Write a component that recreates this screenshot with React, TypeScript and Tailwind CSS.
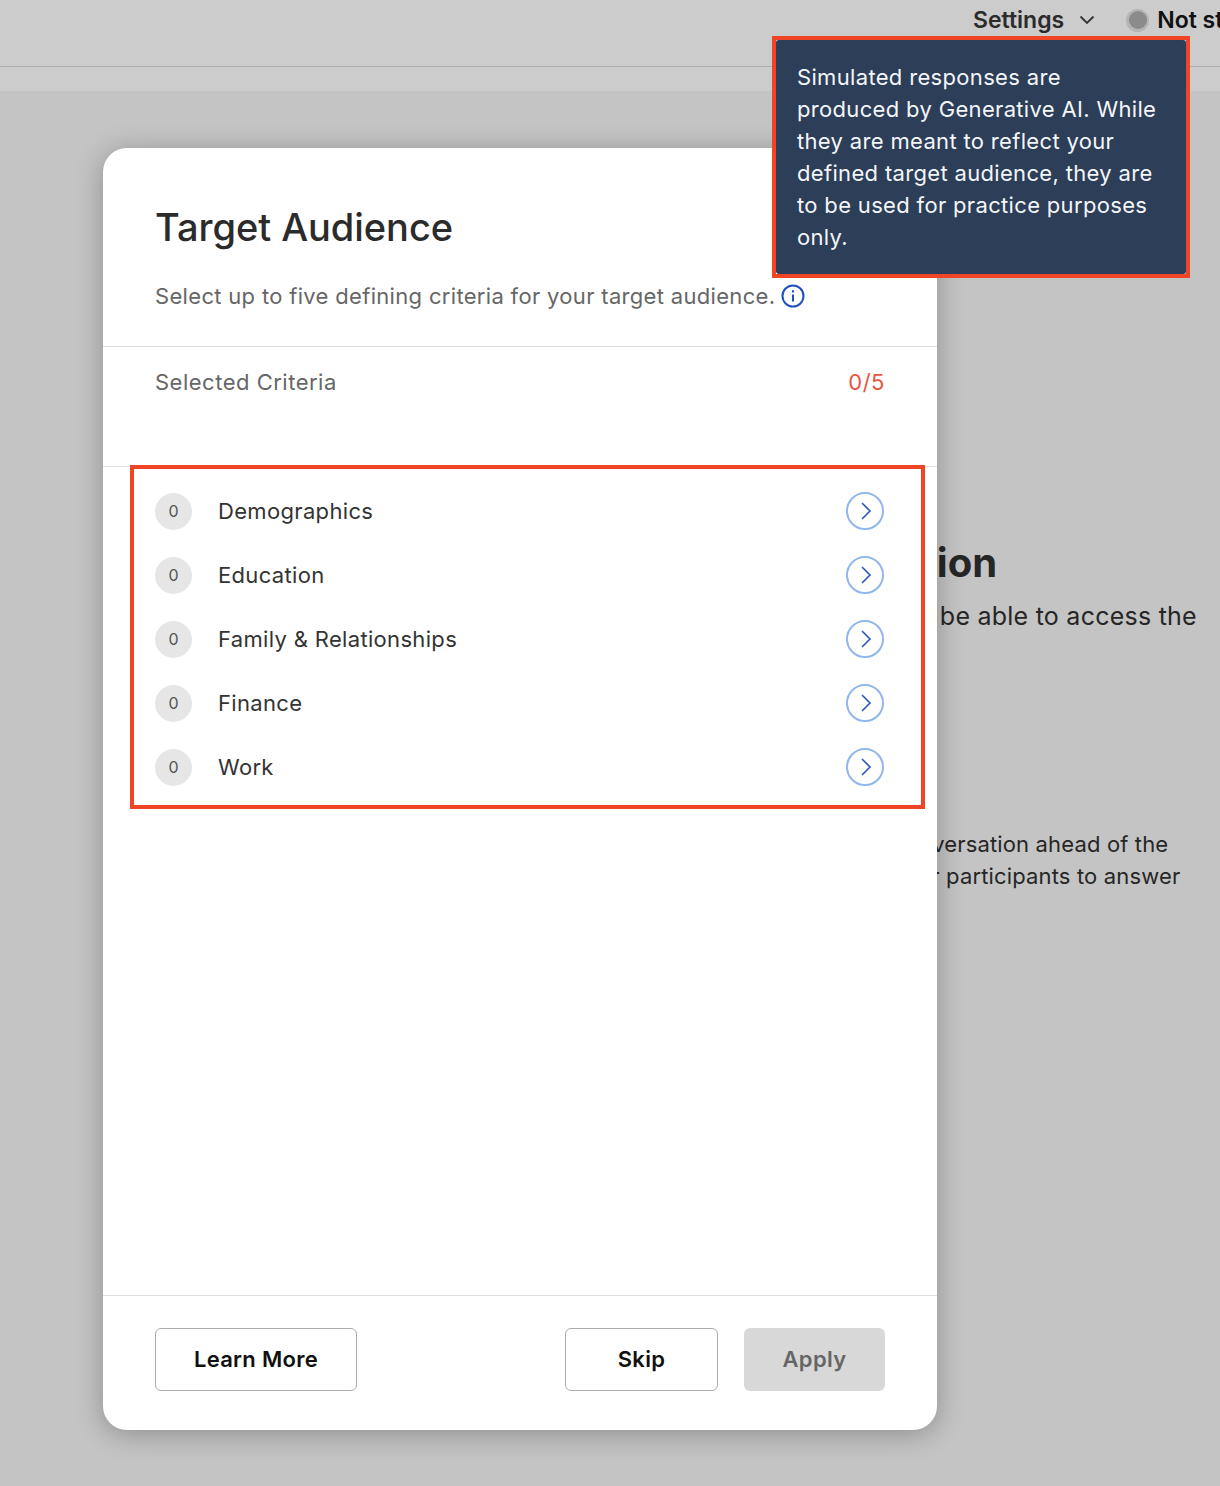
import React from "react";

const rows = ["Demographics", "Education", "Family & Relationships", "Finance", "Work"];

function Row({ label }: { label: string }) {
  return (
    <div className="flex h-16 items-center">
      <div className="flex h-[37px] w-[37px] items-center justify-center rounded-full bg-[#e6e6e6] text-[16px] text-[#555555]">0</div>
      <div className="ml-[26px] flex-1 text-[22px] leading-8 tracking-[0.33px] text-[#333333]">{label}</div>
      <div className="mr-px flex h-[38px] w-[38px] items-center justify-center rounded-full border-2 border-[#93b6ec]">
        <svg className="ml-px" width="12" height="20" viewBox="0 0 12 20" fill="none" stroke="#2a55bd" strokeWidth="1.6">
          <path d="M2 2l8 8-8 8" />
        </svg>
      </div>
    </div>
  );
}

export default function App() {
  return (
    <div className="relative h-[1486px] w-[1220px] overflow-hidden bg-[#c4c4c4] font-['Inter',sans-serif]">
      <header className="flex h-[67px] items-start justify-end border-b border-[#adadad] bg-[#cccccc] pt-[3px]">
        <div className="flex h-[34px] w-[247px] shrink-0 items-center overflow-hidden whitespace-nowrap text-[23px]">
          <span className="font-semibold text-[#2b2b2b]">Settings</span>
          <svg className="ml-[15px] shrink-0" width="16" height="10" viewBox="0 0 16 10" fill="none" stroke="#333333" strokeWidth="1.8">
            <path d="M1.5 1.5L8 8l6.5-6.5" />
          </svg>
          <span className="ml-[31px] flex h-[23px] w-[23px] shrink-0 items-center justify-center rounded-full bg-[#b4b4b4]">
            <span className="h-[18px] w-[18px] rounded-full bg-[#8b8b8b]" />
          </span>
          <span className="ml-[8px] font-semibold text-[#111111]">Not started</span>
        </div>
      </header>
      <div className="h-6 bg-[#cccccc]" />
      <main className="whitespace-nowrap pt-[450px] text-[#262626]">
        <div className="ml-[899px] text-[40px] font-bold leading-[44px]">ation</div>
        <div className="ml-[893px] mt-[13px] text-[25px] leading-9 tracking-[0.24px]">will be able to access the</div>
        <div className="ml-[906px] mt-[194px] text-[22px] leading-8 tracking-[0.15px]">onversation ahead of the</div>
        <div className="ml-[918px] text-[22px] leading-8 tracking-[0.15px]">or participants to answer</div>
      </main>

      <section className="absolute left-[103px] top-[148px] flex h-[1282px] w-[834px] flex-col rounded-[24px] bg-white shadow-[0_4px_28px_rgba(0,0,0,0.28)]">
        <div className="h-[199px] shrink-0 border-b border-[#dddddd] px-[52px] pt-[54px]">
          <h1 className="text-[38px] font-medium leading-[50px] tracking-[-0.05px] text-[#2b2b2b]">Target Audience</h1>
          <div className="mt-[26px] flex items-center text-[22px] leading-9 tracking-[0.32px] text-[#666666]">
            <span>Select up to five defining criteria for your target audience.</span>
            <svg className="ml-[6px]" width="24" height="24" viewBox="0 0 24 24" fill="none" stroke="#1f4fc0" strokeWidth="2">
              <circle cx="12" cy="12" r="10.5" />
              <path d="M12 10.5v7" />
              <path d="M12 6.2v2.2" />
            </svg>
          </div>
        </div>
        <div className="flex h-[120px] shrink-0 justify-between border-b border-[#e2e2e2] px-[52px] pt-[19px] text-[22px] leading-8 tracking-[0.5px]">
          <span className="text-[#666666]">Selected Criteria</span>
          <span className="text-[#e8553f]">0/5</span>
        </div>
        <div className="flex-1 px-[52px] pt-[12px]">
          {rows.map((r) => (
            <Row key={r} label={r} />
          ))}
        </div>
        <div className="flex h-[135px] shrink-0 items-start border-t border-[#dddddd] px-[52px] pt-[32px]">
          <button className="h-[63px] w-[202px] rounded-[6px] border border-[#ababab] text-[22px] font-semibold tracking-[0.3px] text-[#111111]">Learn More</button>
          <button className="ml-auto h-[63px] w-[153px] rounded-[6px] border border-[#ababab] text-[22px] font-semibold tracking-[0.3px] text-[#111111]">Skip</button>
          <button className="ml-[26px] h-[63px] w-[141px] rounded-[6px] bg-[#d8d8d8] text-[22px] font-semibold tracking-[0.3px] text-[#666666]">Apply</button>
        </div>
      </section>

      <div className="absolute left-[772px] top-[36px] h-[242px] w-[418px] border-4 border-[#f04427]">
        <div className="h-full rounded-[3px] bg-[#2c3e58] px-[21px] pt-[21px] text-[22px] leading-8 tracking-[0.33px] text-[#f4f6f8]">
          Simulated responses are produced by Generative AI. While they are meant to reflect your defined target audience, they are to be used for practice purposes only.
        </div>
      </div>
      <div className="absolute left-[130px] top-[465px] h-[344px] w-[795px] border-4 border-[#f04427]" />
    </div>
  );
}
